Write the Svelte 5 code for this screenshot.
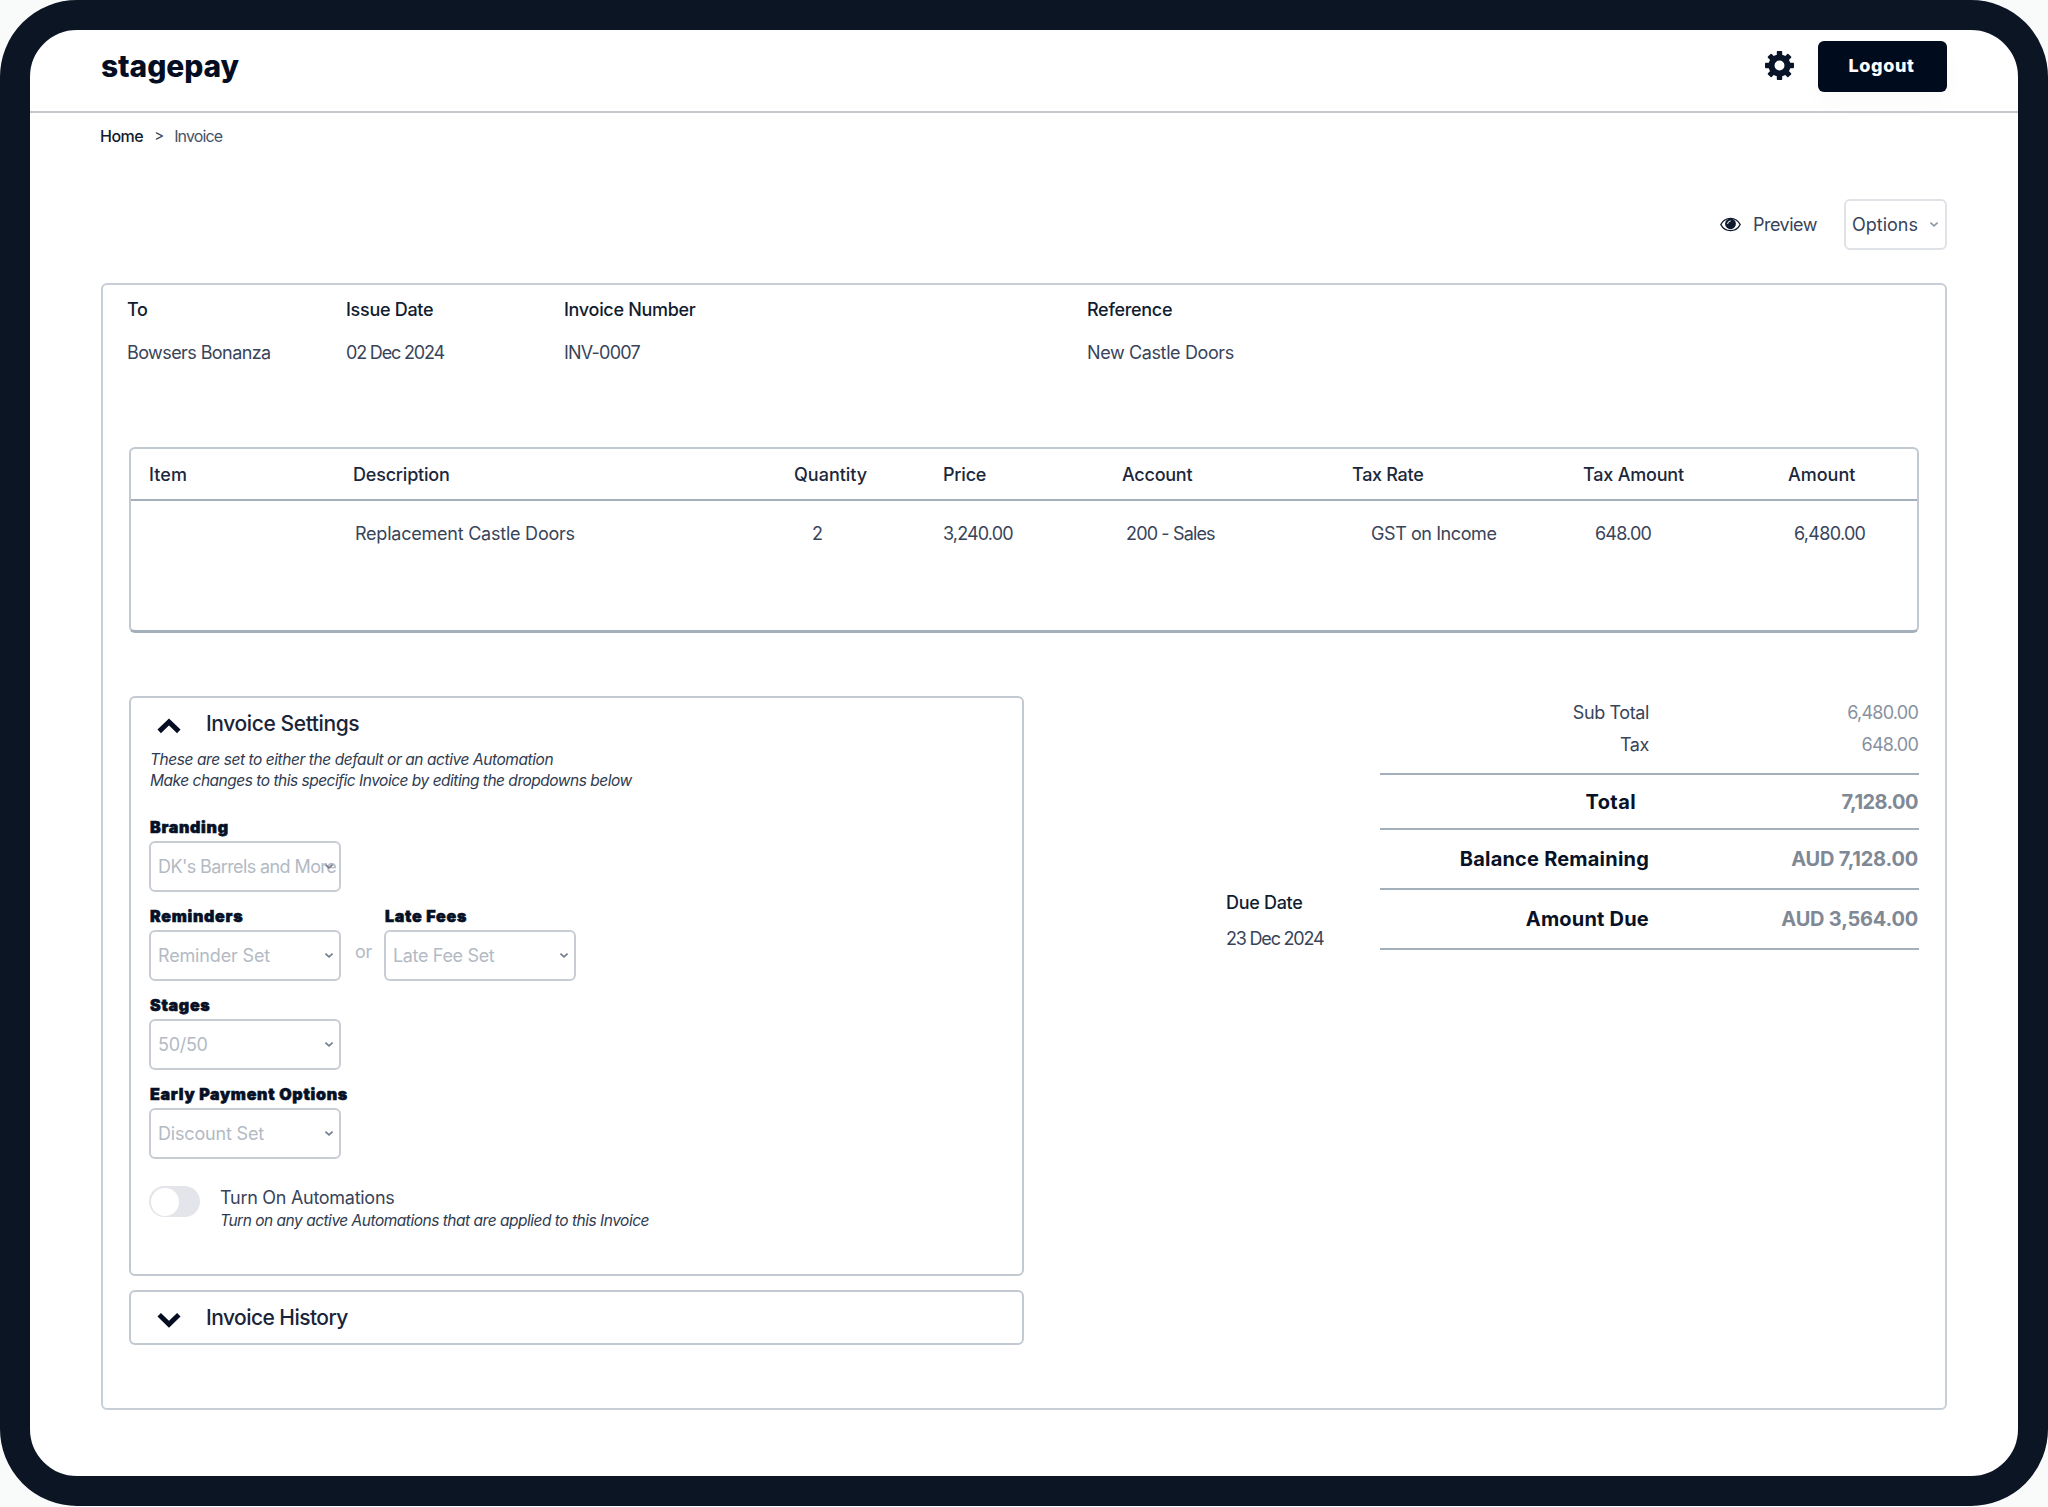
<script>
	let settingsOpen = true;
	let automationsOn = false;

	const meta = [
		{ label: 'To', value: 'Bowsers Bonanza', ls: -0.58 },
		{ label: 'Issue Date', value: '02 Dec 2024', ls: -1.18 },
		{ label: 'Invoice Number', value: 'INV-0007', ls: -0.78 },
		{ label: 'Reference', value: 'New Castle Doors', ls: -0.38 }
	];

	// indent = how far the row value sits right of its heading
	const columns = [
		{ title: 'Item', value: '', indent: 0, ls: 0, titleLs: 0.1 },
		{ title: 'Description', value: 'Replacement Castle Doors', indent: 2, ls: -0.23, titleLs: -0.2 },
		{ title: 'Quantity', value: '2', indent: 18, ls: 0, titleLs: 0 },
		{ title: 'Price', value: '3,240.00', indent: 0, ls: -0.85, titleLs: -0.2 },
		{ title: 'Account', value: '200 - Sales', indent: 4, ls: -0.85, titleLs: -0.25 },
		{ title: 'Tax Rate', value: 'GST on Income', indent: 19, ls: -0.42, titleLs: -0.3 },
		{ title: 'Tax Amount', value: '648.00', indent: 12, ls: -0.8, titleLs: -0.2 },
		{ title: 'Amount', value: '6,480.00', indent: 6, ls: -0.7, titleLs: 0 }
	];

	const fields = [
		[{ label: 'Branding', value: "DK's Barrels and More", ls: -0.6 }],
		[
			{ label: 'Reminders', value: 'Reminder Set', ls: -0.16 },
			{ label: 'Late Fees', value: 'Late Fee Set', ls: -0.34 }
		],
		[{ label: 'Stages', value: '50/50', ls: -0.3 }],
		[{ label: 'Early Payment Options', value: 'Discount Set', ls: -0.18 }]
	];

	const teeth = [0, 45, 90, 135, 180, 225, 270, 315];

	function toggleSettings() {
		settingsOpen = !settingsOpen;
	}

	function toggleAutomations() {
		automationsOn = !automationsOn;
	}
</script>

<div class="device">
	<header>
		<div class="logo">stagepay</div>
		<div class="account">
			<svg class="gear" viewBox="-14 -14 28 28">
				{#each teeth as angle}
					<rect x="-2.6" y="-14" width="5.2" height="7" rx="0.8" transform="rotate({angle})" />
				{/each}
				<circle r="7.7" fill="none" stroke="#0a1428" stroke-width="5.8" />
			</svg>
			<button class="logout">Logout</button>
		</div>
	</header>

	<nav>
		<span class="home">Home</span>
		<span class="sep">&gt;</span>
		<span class="here">Invoice</span>
	</nav>

	<div class="toolbar">
		<svg class="eye" viewBox="0 0 21 15">
			<path d="M0.8 7.5 C5 -0.7 16 -0.7 20.2 7.5 C16 15.7 5 15.7 0.8 7.5Z" fill="#fff" stroke="#0f1a2e" stroke-width="1.4" />
			<circle cx="10.5" cy="6.8" r="5.4" fill="#0f1a2e" />
			<path d="M7.6 6.6 A3 3 0 0 1 10.3 3.9" fill="none" stroke="#fff" stroke-width="1" stroke-linecap="round" />
		</svg>
		<span class="preview">Preview</span>
		<div class="options">
			<span>Options</span>
			<svg class="caret" viewBox="0 0 10 7"><path d="M1.4 1.6 L5 4.9 L8.6 1.6" /></svg>
		</div>
	</div>

	<main>
		<section class="meta">
			{#each meta as m}
				<div>
					<div class="label">{m.label}</div>
					<div class="value" style="letter-spacing: {m.ls}px">{m.value}</div>
				</div>
			{/each}
		</section>

		<section class="table">
			<div class="row head">
				{#each columns as c}
					<div style="letter-spacing: {c.titleLs}px">{c.title}</div>
				{/each}
			</div>
			<div class="row body">
				{#each columns as c}
					<div style="padding-left: {c.indent}px; letter-spacing: {c.ls}px">{c.value}</div>
				{/each}
			</div>
		</section>

		<div class="lower">
			<div class="panels">
				<section class="panel settings">
					<div class="title" on:click={toggleSettings} role="presentation">
						<svg class="chevron" viewBox="0 0 24 16"><path d="M2.2 13.4 L12 4 L21.8 13.4" /></svg>
						<h2>Invoice Settings</h2>
					</div>
					{#if settingsOpen}
						<p class="hint first">These are set to either the default or an active Automation</p>
						<p class="hint">Make changes to this specific Invoice by editing the dropdowns below</p>
						<div class="fields">
							{#each fields as group}
								<div class="group">
									{#each group as f, i}
										{#if i > 0}
											<span class="or">or</span>
										{/if}
										<div class="field">
											<div class="name">{f.label}</div>
											<div class="select">
												<span style="letter-spacing: {f.ls}px">{f.value}</span>
												<svg class="caret dark" viewBox="0 0 10 7"><path d="M1.4 1.6 L5 4.9 L8.6 1.6" /></svg>
											</div>
										</div>
									{/each}
								</div>
							{/each}
						</div>
						<div class="automation">
							<div class="switch" class:on={automationsOn} on:click={toggleAutomations} role="presentation">
								<div class="knob"></div>
							</div>
							<div>
								<div class="turn">Turn On Automations</div>
								<p class="hint">Turn on any active Automations that are applied to this Invoice</p>
							</div>
						</div>
					{/if}
				</section>

				<section class="panel history">
					<div class="title">
						<svg class="chevron" viewBox="0 0 24 16"><path d="M2.2 2.8 L12 12.2 L21.8 2.8" /></svg>
						<h2 class="tight">Invoice History</h2>
					</div>
				</section>
			</div>

			<div class="due">
				<div class="label">Due Date</div>
				<div class="value">23 Dec 2024</div>
			</div>

			<div class="totals">
				<div class="line"><span>Sub Total</span><span class="num">6,480.00</span></div>
				<div class="line"><span>Tax</span><span class="num">648.00</span></div>
				<div class="line big total"><span>Total</span><span class="num">7,128.00</span></div>
				<div class="line big tall"><span>Balance Remaining</span><span class="num">AUD 7,128.00</span></div>
				<div class="line big tall last"><span>Amount Due</span><span class="num">AUD 3,564.00</span></div>
			</div>
		</div>
	</main>
</div>

<style>
	:global(body) {
		background: #f9fbfb;
	}

	* {
		box-sizing: border-box;
	}

	.device {
		width: 2048px;
		height: 1506px;
		border: 30px solid #0b1523;
		border-radius: 77px;
		background: #fff;
		font-family: Inter, sans-serif;
		font-size: 18px;
		font-weight: 370;
		line-height: 24px;
		color: #38445a;
		overflow: hidden;
		white-space: nowrap;
	}

	header {
		display: flex;
		justify-content: space-between;
		align-items: flex-start;
		height: 83px;
		padding: 11px 71px 0 71px;
		border-bottom: 2px solid #c6c9cd;
	}

	.logo {
		margin-top: 5px;
		font-size: 30px;
		font-weight: 800;
		line-height: 40px;
		letter-spacing: -0.1px;
		color: #040d22;
	}

	.account {
		display: flex;
		align-items: flex-start;
		gap: 24px;
	}

	.gear {
		width: 29px;
		height: 29px;
		margin-top: 10px;
		fill: #0a1428;
	}

	.logout {
		width: 129px;
		height: 51px;
		padding: 0 2px 3px 0;
		border: none;
		border-radius: 6px;
		background: #010b1e;
		box-shadow: 0 10px 24px rgba(20, 50, 40, 0.025);
		color: #fff;
		font: 800 18px Inter, sans-serif;
		letter-spacing: 0.6px;
	}

	nav {
		display: flex;
		height: 20px;
		margin: 13px 0 0 70px;
		font-size: 16px;
		line-height: 20px;
	}

	.home {
		font-weight: 500;
		color: #0f1b2f;
		letter-spacing: -0.5px;
	}

	.sep {
		margin: 0 10px 0 11px;
		font-size: 15px;
	}

	.here {
		letter-spacing: -0.85px;
		color: #465166;
	}

	.toolbar {
		display: flex;
		justify-content: flex-end;
		align-items: center;
		height: 51px;
		margin: 53px 71px 0 0;
	}

	.eye {
		width: 21px;
		height: 15px;
	}

	.preview {
		margin: 0 27px 0 12px;
		letter-spacing: -0.5px;
	}

	.preview,
	.options span {
		padding-top: 1px;
	}

	.options {
		display: flex;
		align-items: center;
		justify-content: space-between;
		width: 103px;
		height: 51px;
		padding: 0 6px;
		border: 2px solid #dfe2e6;
		border-radius: 6px;
	}

	.caret {
		width: 10px;
		height: 7px;
		flex: none;
	}

	.caret path {
		fill: none;
		stroke: #8f98a5;
		stroke-width: 1.6;
	}

	.caret.dark path {
		stroke: #76808f;
		stroke-width: 1.8;
	}

	main {
		width: 1846px;
		height: 1127px;
		margin: 33px 0 0 71px;
		padding: 13px 26px 0;
		border: 2px solid #c8ced5;
		border-radius: 6px;
	}

	.meta {
		display: grid;
		grid-template-columns: 219px 218px 523px 1fr;
		margin-left: -2px;
	}

	.label {
		margin-bottom: 19px;
		font-weight: 500;
		letter-spacing: -0.3px;
		color: #111c30;
	}

	.table {
		height: 186px;
		margin-top: 82px;
		border: 2px solid #c2c9d1;
		border-bottom: 3px solid #a3afba;
		border-radius: 6px;
	}

	.row {
		display: grid;
		grid-template-columns: 204px 441px 149px 179px 230px 231px 205px 1fr;
		padding-left: 18px;
	}

	.head {
		height: 52px;
		line-height: 51px;
		border-bottom: 2px solid #a3afba;
		font-weight: 500;
		color: #1c273b;
	}

	.body {
		padding-top: 21px;
	}

	.lower {
		display: flex;
		margin-top: 63px;
	}

	.panels {
		width: 895px;
	}

	.panel {
		border: 2px solid #c2c9d1;
		border-radius: 6px;
	}

	.settings {
		height: 580px;
		padding: 11px 0 0 18px;
	}

	.title {
		display: flex;
		align-items: center;
		height: 30px;
		padding-left: 8px;
	}

	.chevron {
		width: 24px;
		height: 16px;
		margin-top: 3px;
	}

	.chevron path {
		fill: none;
		stroke: #040d22;
		stroke-width: 5;
	}

	h2 {
		margin: 0 0 0 25px;
		font-size: 21px;
		font-weight: 450;
		line-height: 30px;
		letter-spacing: -0.4px;
		color: #1a2438;
	}

	.tight {
		letter-spacing: -0.55px;
	}

	.hint {
		margin: 0 0 0 1px;
		font-size: 15.5px;
		font-style: italic;
		font-weight: 400;
		line-height: 21px;
		letter-spacing: -0.49px;
		color: #2f3b50;
	}

	.hint.first {
		margin-top: 10px;
		letter-spacing: -0.43px;
	}

	.fields {
		margin-top: 26px;
	}

	.group {
		display: flex;
		height: 75px;
		margin-bottom: 14px;
	}

	.fields .group:last-child {
		margin-bottom: 0;
	}

	.field {
		width: 192px;
	}

	.name {
		margin-bottom: 4px;
		padding-left: 1px;
		font-size: 16px;
		font-weight: 900;
		line-height: 20px;
		letter-spacing: 0.72px;
		color: #061026;
		-webkit-text-stroke: 0.6px #061026;
	}

	.select {
		display: flex;
		align-items: center;
		height: 51px;
		padding-left: 7px;
		border: 2px solid #c8cdd4;
		border-radius: 6px;
		color: #b3bac4;
	}

	.select span {
		flex: none;
		width: 168px;
		padding-top: 1px;
	}

	/* the arrow keeps its place even when a long value runs under it */
	.select .caret {
		margin: 0 5px 0 -2px;
	}

	.or {
		width: 43px;
		padding: 34px 0 0 14px;
		color: #b3bac4;
		letter-spacing: -0.4px;
	}

	.automation {
		display: flex;
		margin-top: 27px;
	}

	.automation > div:last-child {
		margin-left: 20px;
	}

	.automation .hint {
		margin-left: 0;
	}

	.switch {
		width: 51px;
		height: 31px;
		padding: 1.5px;
		border-radius: 16px;
		background: #e4e5ea;
	}

	.switch.on {
		padding-left: 21.5px;
	}

	.knob {
		width: 28px;
		height: 28px;
		border-radius: 50%;
		background: #fff;
	}

	.turn {
		letter-spacing: -0.28px;
	}

	.history {
		height: 55px;
		margin-top: 14px;
		padding: 11px 0 0 18px;
	}

	.due {
		width: 154px;
		margin: 195px 0 0 202px;
	}

	.due .label {
		margin-bottom: 12px;
	}

	.due .value {
		letter-spacing: -1.2px;
	}

	.totals {
		width: 539px;
		padding-top: 1px;
	}

	.line {
		display: grid;
		grid-template-columns: 269px 1fr;
		height: 32px;
		padding-right: 1px;
		line-height: 32px;
		text-align: right;
		letter-spacing: -0.4px;
	}

	.num {
		color: #8791a0;
		letter-spacing: -0.75px;
	}

	.big {
		border-top: 2px solid #a3afba;
		font-size: 20px;
		font-weight: 700;
		letter-spacing: 0.2px;
		color: #081226;
	}

	.big .num {
		color: #7f8995;
		letter-spacing: -0.2px;
	}

	.total {
		height: 55px;
		margin-top: 12px;
		line-height: 55px;
	}

	.total span:first-child {
		padding-right: 13px;
		letter-spacing: 0.4px;
	}

	.total .num {
		letter-spacing: -0.55px;
	}

	.tall {
		height: 60px;
		line-height: 58px;
	}

	.last {
		height: 62px;
		border-bottom: 2px solid #a3afba;
	}
</style>
